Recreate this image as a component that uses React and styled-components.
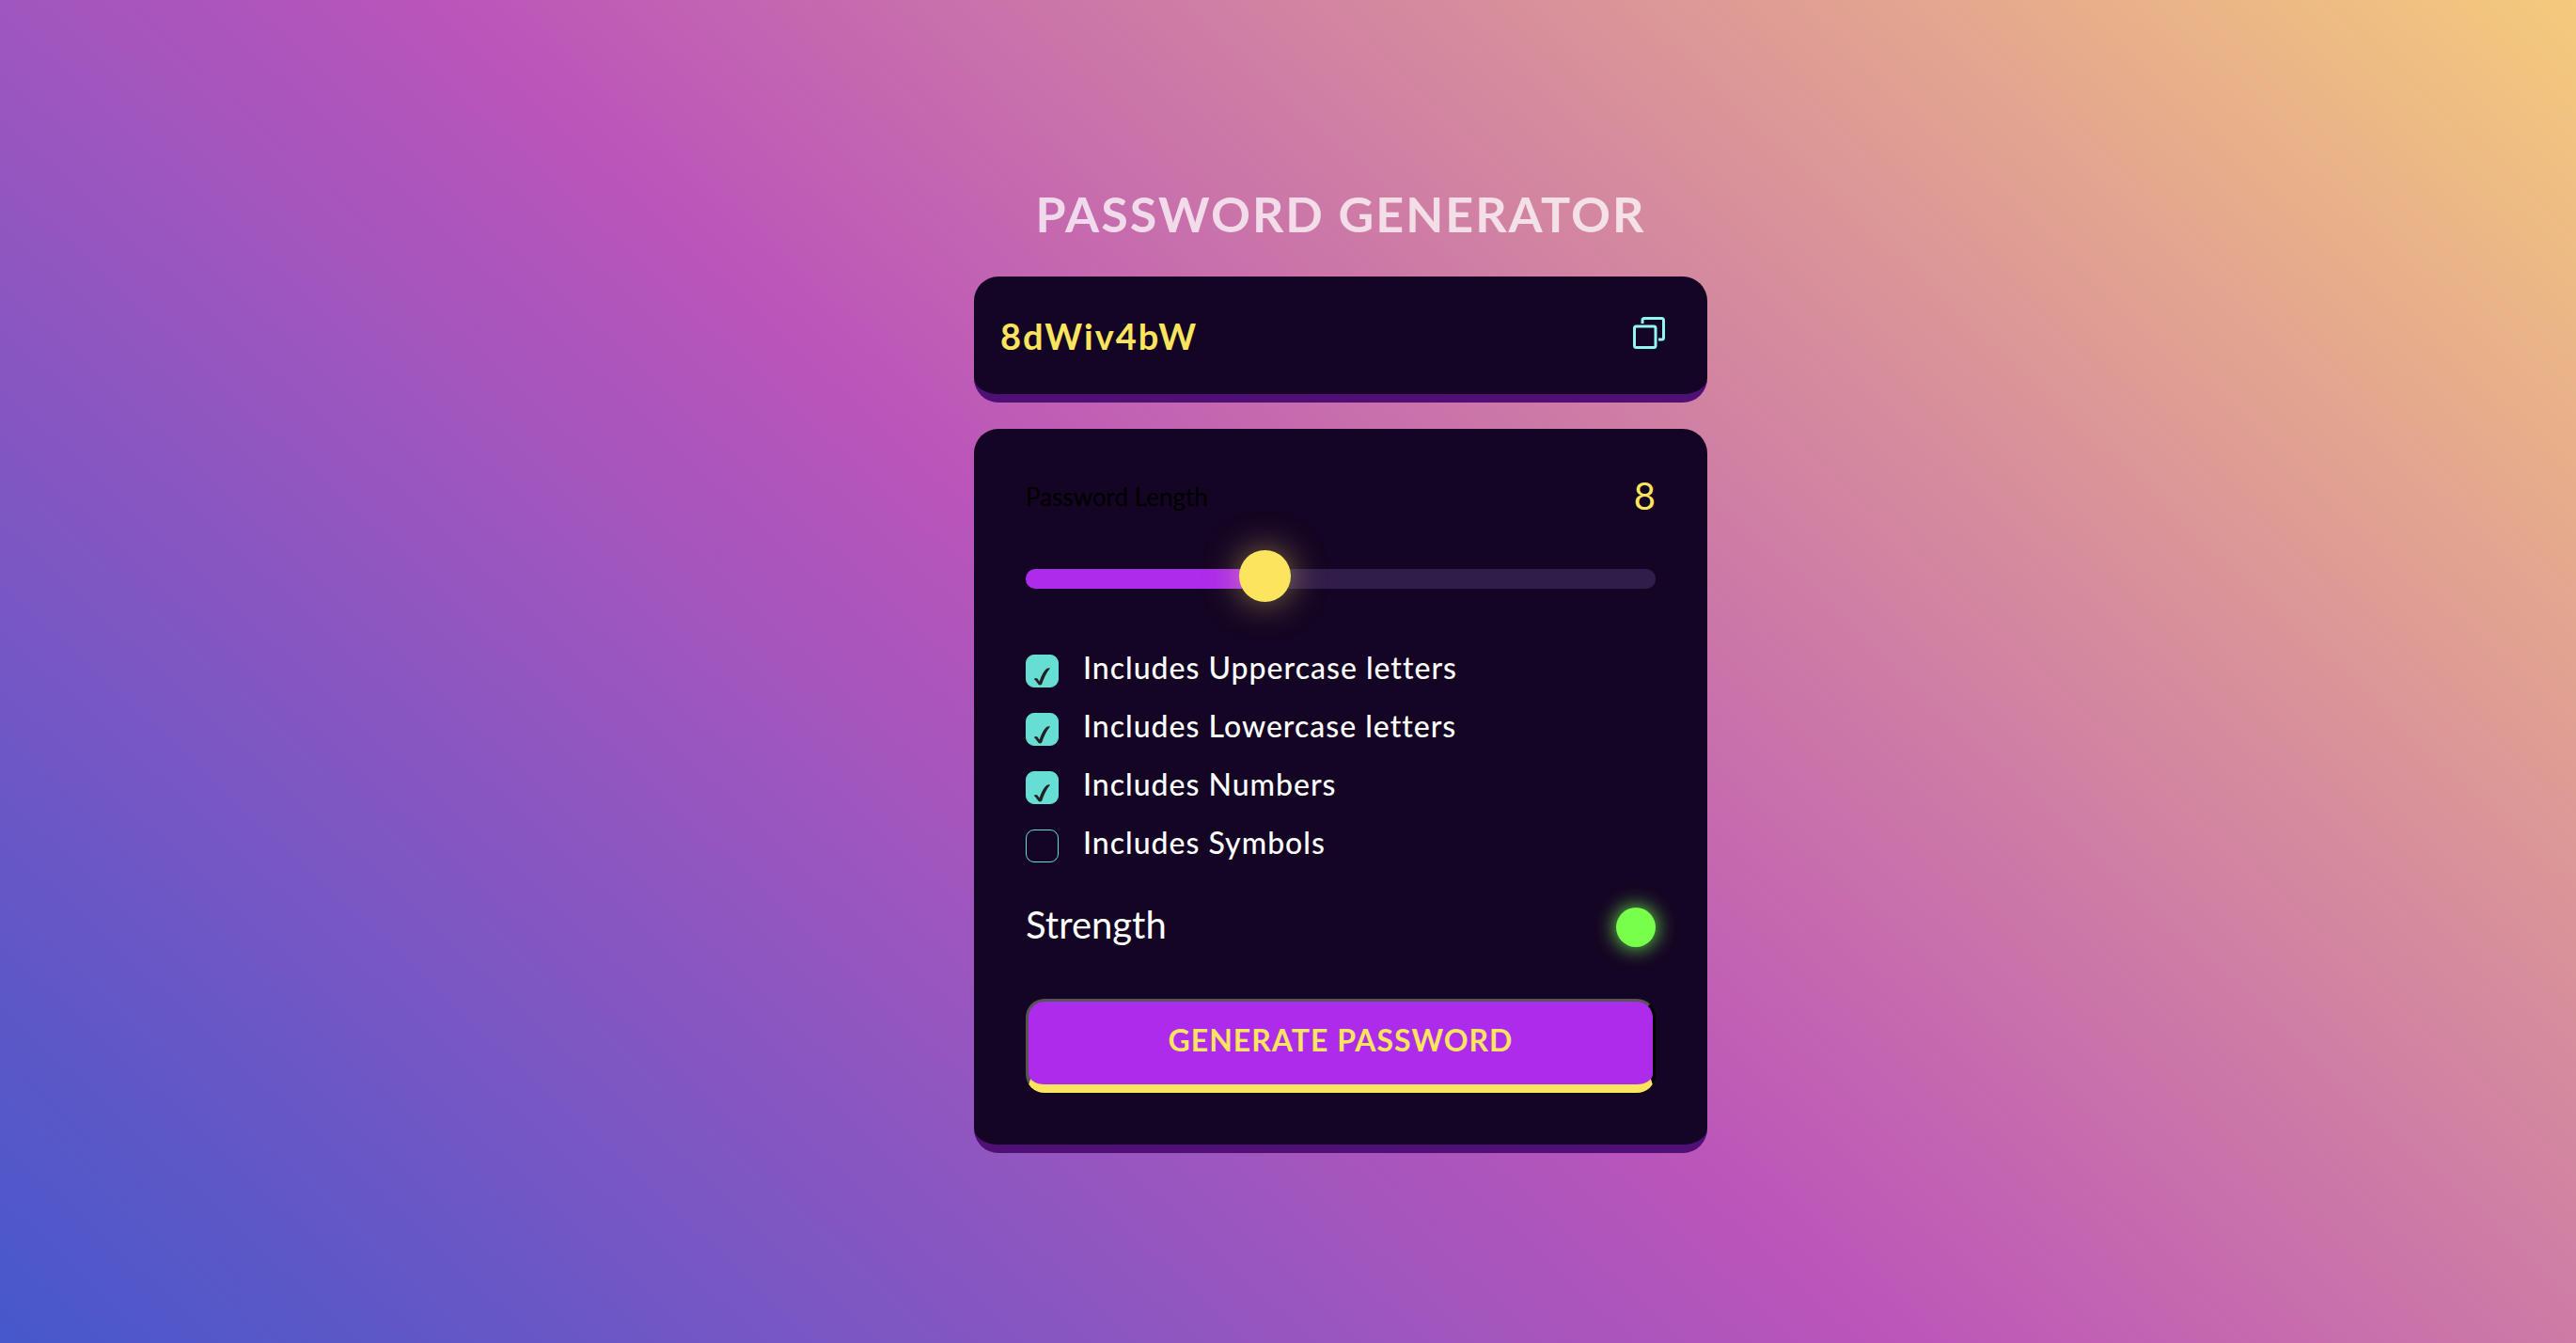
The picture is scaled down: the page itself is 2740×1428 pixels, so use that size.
import React, { useState } from "react";
import styled, { createGlobalStyle } from "styled-components";

const color = {
  dark: "#140524",
  edge: "#500f75",
  track: "#311d4a",
  violet: "#ad2beb",
  yellow: "#fbe55f",
  cyan: "#67ded3",
  icon: "#8ff8f1",
  green: "#77ff4c",
};

const GlobalStyle = createGlobalStyle`
  *, *::before, *::after { box-sizing: border-box; }
  body {
    margin: 0;
    font-family: Lato, "Open Sans", sans-serif;
  }
  input, button { margin: 0; font-family: inherit; }
`;

const Page = styled.main`
  min-height: 100vh;
  display: flex;
  align-items: center;
  justify-content: center;
  padding: 24px 0 26px 112px;
  background: linear-gradient(43deg, #4658cb 0%, #bb55ba 47%, #f5ca7c 100%);
`;

const Container = styled.div`
  width: 780px;
  max-width: 100%;
  display: flex;
  flex-direction: column;
`;

const Title = styled.h1`
  margin: 0 0 41px;
  font-size: 52px;
  line-height: 52px;
  font-weight: 700;
  letter-spacing: 2px;
  text-align: center;
  text-transform: uppercase;
  color: rgba(255, 255, 255, 0.75);
`;

const Card = styled.section`
  background: ${color.dark};
  border-bottom: 9px solid ${color.edge};
  border-radius: 26px;
`;

const Display = styled(Card)`
  display: flex;
  align-items: center;
  height: 134px;
  margin-bottom: 28px;
  padding: 0 45px 0 28px;
`;

const PasswordField = styled.input`
  flex: 1;
  min-width: 0;
  padding: 2px 0 0;
  border: 0;
  outline: 0;
  background: transparent;
  color: ${color.yellow};
  font-size: 38px;
  line-height: 48px;
  font-weight: 700;
  letter-spacing: 2px;
`;

const CopyButton = styled.button`
  display: flex;
  padding: 0 0 4px;
  border: 0;
  background: transparent;
  color: ${color.icon};
  cursor: pointer;

  svg { width: 34px; height: 34px; }
`;

const Settings = styled(Card)`
  display: flex;
  flex-direction: column;
  padding: 55px;
`;

const Row = styled.div`
  display: flex;
  align-items: center;
  justify-content: space-between;
`;

const LengthRow = styled(Row)`
  height: 32px;
  margin-bottom: 62px;
`;

const LengthLabel = styled.label`
  padding-top: 2px;
  font-size: 26px;
  color: #000;
`;

const LengthValue = styled.output`
  font-size: 40px;
  line-height: 32px;
  color: ${color.yellow};
`;

const Slider = styled.input`
  appearance: none;
  display: block;
  width: 100%;
  height: 21px;
  border-radius: 10px;
  background-color: ${color.track};
  background-image: linear-gradient(${color.violet}, ${color.violet});
  background-repeat: no-repeat;
  cursor: pointer;

  &::-webkit-slider-thumb {
    appearance: none;
    width: 55px;
    height: 55px;
    margin-top: -3px;
    border-radius: 50%;
    background: ${color.yellow};
    box-shadow: 0 0 36px rgba(255, 229, 95, 0.5);
  }

  &::-webkit-slider-runnable-track {
    height: 55px;
  }
`;

const Options = styled.div`
  display: flex;
  flex-direction: column;
  gap: 27px;
  margin: 70px 0 48px;
`;

const Option = styled.label`
  display: flex;
  align-items: center;
  gap: 26px;
  height: 35px;
  color: #fff;
  font-size: 32px;
  line-height: 27px;
  font-weight: 500;
  letter-spacing: 1px;
`;

const OptionText = styled.span`
  padding-bottom: 8px;
`;

const CheckSlot = styled.span`
  display: grid;
  width: 35px;
  height: 35px;

  > * { grid-area: 1 / 1; }
`;

const Checkbox = styled.input`
  appearance: none;
  width: 35px;
  height: 35px;
  border: 1px solid ${color.cyan};
  border-radius: 9px;
  cursor: pointer;

  &:checked { background: ${color.cyan}; }
  &:not(:checked) + svg { visibility: hidden; }
`;

const CheckMark = styled.svg`
  width: 35px;
  height: 35px;
  fill: #222;
  pointer-events: none;
`;

const StrengthRow = styled(Row)`
  margin-bottom: 55px;
  color: #fff;
  font-size: 40px;
  line-height: 42px;
`;

const StrengthText = styled.span`
  padding-bottom: 6px;
  line-height: 36px;
`;

const Indicator = styled.span`
  width: 42px;
  height: 42px;
  border-radius: 50%;
  background: ${(p) => p.$tone};
  box-shadow: 0 0 22px ${(p) => p.$tone};
`;

const GenerateButton = styled.button`
  height: 100px;
  padding: 0 0 6px;
  border-style: solid;
  border-width: 3px 3px 9px;
  border-color: #555 #000 ${color.yellow} #555;
  border-radius: 20px;
  background: ${color.violet};
  color: ${color.yellow};
  font-size: 32px;
  font-weight: 700;
  letter-spacing: 1px;
  text-transform: uppercase;
  cursor: pointer;
`;

const MAX_LENGTH = 20;

const OPTIONS = [
  { id: "upper", label: "Includes Uppercase letters", chars: "ABCDEFGHIJKLMNOPQRSTUVWXYZ" },
  { id: "lower", label: "Includes Lowercase letters", chars: "abcdefghijklmnopqrstuvwxyz" },
  { id: "number", label: "Includes Numbers", chars: "0123456789" },
  { id: "symbol", label: "Includes Symbols", chars: "~`!@#$%^&*()_-+={[}]|:;<,>.?/" },
];

function CopyIcon() {
  return (
    <svg viewBox="0 0 34 34" fill="none" stroke="currentColor" strokeWidth="3" aria-hidden="true">
      <rect x="1.5" y="10" width="22.5" height="22.5" rx="2" />
      <path d="M10 7V3.5a2 2 0 0 1 2-2H30.500a2 2 0 0 1 2 2V22a2 2 0 0 1-2 2H27" />
    </svg>
  );
}

export default function App() {
  const [password, setPassword] = useState("8dWiv4bW");
  const [length, setLength] = useState(8);
  const [enabled, setEnabled] = useState({ upper: true, lower: true, number: true, symbol: false });

  const count = Object.values(enabled).filter(Boolean).length;
  const tone = count >= 3 && length >= 8 ? color.green : count >= 2 && length >= 6 ? "#ff0" : "#f00";

  const generate = () => {
    const pool = OPTIONS.filter((o) => enabled[o.id]).map((o) => o.chars).join("");
    if (!pool) return;
    setPassword(Array.from({ length }, () => pool[Math.floor(Math.random() * pool.length)]).join(""));
  };

  return (
    <>
      <GlobalStyle />
      <Page>
        <Container>
          <Title>Password Generator</Title>
          <Display>
            <PasswordField readOnly value={password} aria-label="Password" />
            <CopyButton type="button" aria-label="Copy" onClick={() => navigator.clipboard?.writeText(password)}>
              <CopyIcon />
            </CopyButton>
          </Display>
          <Settings>
            <LengthRow>
              <LengthLabel htmlFor="length">Password Length</LengthLabel>
              <LengthValue htmlFor="length">{length}</LengthValue>
            </LengthRow>
            <Slider
              id="length"
              type="range"
              min="1"
              max={MAX_LENGTH}
              value={length}
              onChange={(e) => setLength(Number(e.target.value))}
              style={{ backgroundSize: `${((length - 1) / (MAX_LENGTH - 1)) * 100}% 100%` }}
            />
            <Options>
              {OPTIONS.map((o) => (
                <Option key={o.id}>
                  <CheckSlot>
                    <Checkbox
                      type="checkbox"
                      checked={enabled[o.id]}
                      onChange={(e) => setEnabled({ ...enabled, [o.id]: e.target.checked })}
                    />
                    <CheckMark viewBox="0 0 35 35" aria-hidden="true">
                      <path d="M8.700 26q2.200-1.900 3.700-.4L14.600 28.600C16.500 22.500 19.500 17 22.600 14.700q2-.9 3.400-.2C22 19 19.200 25.500 17.200 31.500q-1.700 1.600-3.500.6C12.300 30 10.800 27.700 8.700 26Z" />
                    </CheckMark>
                  </CheckSlot>
                  <OptionText>{o.label}</OptionText>
                </Option>
              ))}
            </Options>
            <StrengthRow>
              <StrengthText>Strength</StrengthText>
              <Indicator $tone={tone} />
            </StrengthRow>
            <GenerateButton type="button" onClick={generate}>Generate Password</GenerateButton>
          </Settings>
        </Container>
      </Page>
    </>
  );
}
